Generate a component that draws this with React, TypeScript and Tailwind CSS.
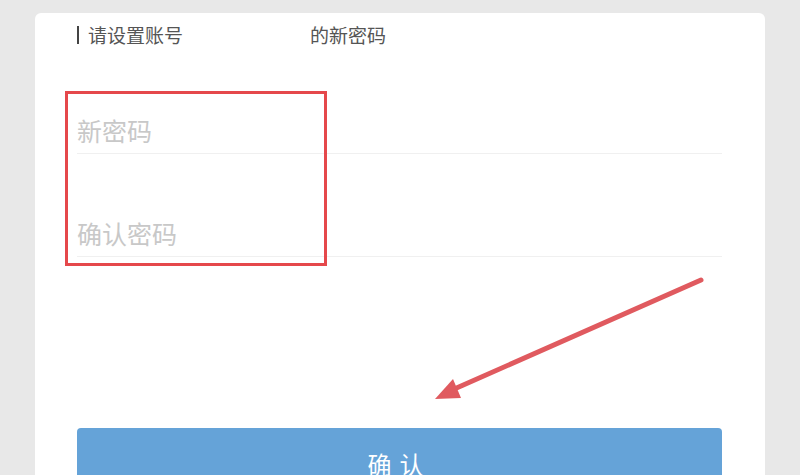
export default function App() {
  const font = { fontFamily: '"Noto Sans CJK SC", "Noto Sans", sans-serif' };

  return (
    <div
      className="relative h-[475px] w-[800px] overflow-hidden bg-[#e8e8e8] px-[35px] pt-[13px]"
      style={font}
    >
      <div className="flex h-full flex-col rounded-t-md bg-white pl-[42px] pr-[43px] pt-[12px]">
        {/* heading */}
        <div className="flex items-center text-[19px] leading-[20px] text-[#555]">
          <span className="mr-[9px] h-[18px] w-[2px] bg-[#444]" />
          <span>请设置账号</span>
          <span className="w-[127px]" />
          <span>的新密码</span>
        </div>

        {/* fields */}
        <div className="mt-[62px] border-b border-[#f0f0f0]">
          <input
            type="password"
            placeholder="新密码"
            className="h-[46px] w-full bg-transparent text-[25px] text-[#333] outline-none placeholder:text-[#c8c8c8]"
          />
        </div>
        <div className="mt-[56px] border-b border-[#f0f0f0]">
          <input
            type="password"
            placeholder="确认密码"
            className="h-[46px] w-full bg-transparent text-[25px] text-[#333] outline-none placeholder:text-[#c8c8c8]"
          />
        </div>

        <button className="mt-[171px] h-[72px] w-full shrink-0 rounded-[4px] bg-[#65a3d8] text-[24px] tracking-[8px] text-white">
          确认
        </button>
      </div>

      {/* annotation: red box */}
      <div className="absolute left-[65px] top-[91px] h-[175px] w-[262px] border-[3px] border-[#e5484b]" />

      {/* annotation: arrow */}
      <svg className="absolute left-0 top-0" width="800" height="475" viewBox="0 0 800 475">
        <line x1="701" y1="280" x2="452" y2="390" stroke="#e05a5f" strokeWidth="5" strokeLinecap="round" />
        <polygon points="435,399 453,379 461,398" fill="#e05a5f" />
      </svg>
    </div>
  );
}
